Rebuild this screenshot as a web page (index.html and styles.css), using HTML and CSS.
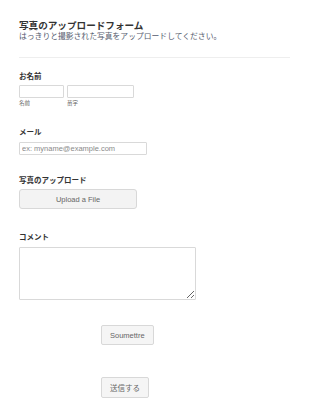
FILE: index.html
```html
<!DOCTYPE html>
<html lang="ja">
<head>
<meta charset="utf-8">
<link rel="stylesheet" href="styles.css">
</head>
<body>
<form class="form">
  <div class="header">
    <h1 class="title">写真のアップロードフォーム</h1>
    <p class="subtitle">はっきりと撮影された写真をアップロードしてください。</p>
  </div>

  <div class="field field-name">
    <div class="label">お名前</div>
    <div class="name-row">
      <div class="name-col">
        <input class="input input-first" type="text">
        <span class="sublabel">名前</span>
      </div>
      <div class="name-col">
        <input class="input input-last" type="text">
        <span class="sublabel">苗字</span>
      </div>
    </div>
  </div>

  <div class="field field-email">
    <div class="label">メール</div>
    <input class="input input-email" type="text" placeholder="ex: myname@example.com">
  </div>

  <div class="field field-upload">
    <div class="label">写真のアップロード</div>
    <button type="button" class="upload-btn">Upload a File</button>
  </div>

  <div class="field field-comment">
    <div class="label">コメント</div>
    <textarea class="textarea"></textarea>
  </div>

  <div class="submit-row submit-first">
    <button type="button" class="submit-btn">Soumettre</button>
  </div>
  <div class="submit-row submit-second">
    <button type="button" class="submit-btn submit-jp">送信する</button>
  </div>
</form>
</body>
</html>
```

FILE: styles.css
```css
html, body {
  margin: 0;
  padding: 0;
  background: #ffffff;
}

body {
  font-family: "Noto Sans CJK JP", "Liberation Sans", sans-serif;
  color: #333333;
}

.form {
  width: 271px;
  padding: 20px 19px 0 19px;
  display: flex;
  flex-direction: column;
}

.header {
  padding-bottom: 16px;
  border-bottom: 1px solid #eeeeee;
}

.title {
  margin: 0;
  font-size: 9.6px;
  line-height: 11px;
  font-weight: 700;
  color: #333333;
}

.subtitle {
  margin: 0;
  font-size: 7.8px;
  line-height: 10px;
  color: #555b6e;
}

.field {
  display: flex;
  flex-direction: column;
  align-items: flex-start;
}

.label {
  font-size: 7.5px;
  line-height: 10px;
  font-weight: 700;
  color: #333333;
}

.field-name {
  margin-top: 13px;
}

.name-row {
  display: flex;
  gap: 3px;
  margin-top: 4px;
}

.name-col {
  display: flex;
  flex-direction: column;
}

.input {
  box-sizing: border-box;
  height: 13px;
  margin: 0;
  padding: 0 2px;
  border: 1px solid #d9d9d9;
  border-radius: 1px;
  background: #fff;
  font-family: "Liberation Sans", sans-serif;
  font-size: 7.5px;
  color: #555;
  outline: none;
}

.input-first { width: 45px; }
.input-last { width: 67px; }

.sublabel {
  font-size: 5.5px;
  line-height: 7px;
  margin-top: 2px;
  color: #666666;
}

.field-email {
  margin-top: 20px;
}

.field-email .label {
  margin-bottom: 5px;
}

.input-email {
  width: 128px;
}

.input-email::placeholder {
  color: #8a8a8a;
}

.field-upload {
  margin-top: 20px;
}

.field-upload .label {
  margin-bottom: 4px;
}

.upload-btn {
  box-sizing: border-box;
  width: 118px;
  height: 20px;
  margin: 0;
  padding: 0;
  border: 1px solid #d8d8d8;
  border-radius: 3px;
  background: #f3f3f3;
  font-family: "Liberation Sans", sans-serif;
  font-size: 7.5px;
  color: #666;
}

.field-comment {
  margin-top: 23px;
}

.field-comment .label {
  margin-bottom: 5px;
}

.textarea {
  box-sizing: border-box;
  display: block;
  width: 177px;
  height: 53px;
  margin: 0;
  padding: 2px;
  border: 1px solid #d9d9d9;
  border-radius: 1px;
  resize: both;
  background: #fff;
}

.submit-row {
  display: flex;
  padding-left: 82px;
}

.submit-first {
  margin-top: 25px;
}

.submit-second {
  margin-top: 32px;
}

.submit-btn {
  box-sizing: border-box;
  height: 20px;
  margin: 0;
  padding: 0 8px;
  border: 1px solid #d8d8d8;
  border-radius: 2px;
  background: #f5f5f5;
  font-family: "Liberation Sans", sans-serif;
  font-size: 7.5px;
  color: #666;
}

.submit-jp {
  height: 21px;
  font-family: "Noto Sans CJK JP", sans-serif;
}
```
